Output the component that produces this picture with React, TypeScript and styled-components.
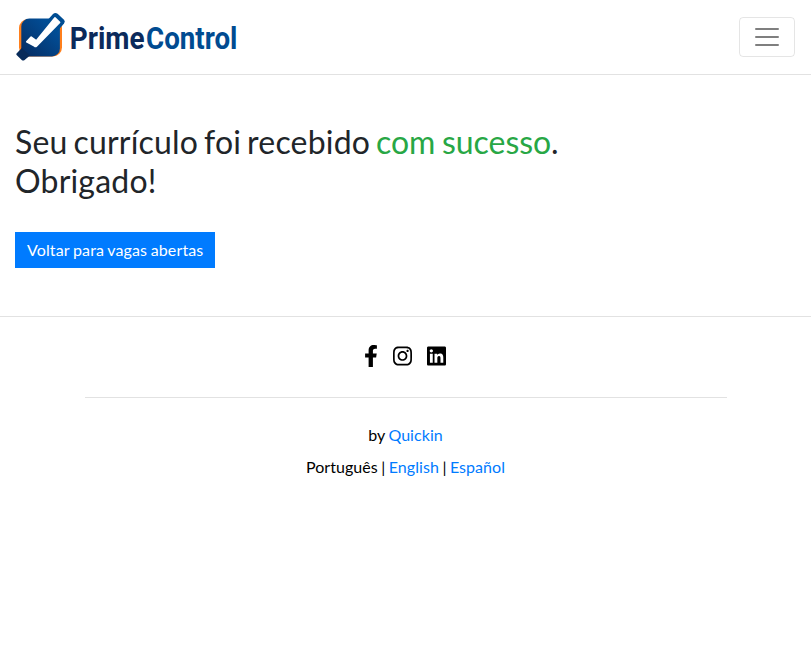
import React from "react";
import styled, { createGlobalStyle } from "styled-components";
import { FaFacebookF, FaInstagram, FaLinkedin } from "react-icons/fa";

const GlobalStyle = createGlobalStyle`
  *, *::before, *::after { box-sizing: border-box; }
  body {
    margin: 0;
    background: #fff;
    color: #212529;
    font: 400 16px/1.5 Lato, sans-serif;
  }
`;

const Header = styled.header`
  display: flex;
  align-items: center;
  justify-content: space-between;
  height: 75px;
  padding: 0 16px;
  border-bottom: 1px solid #e2e2e2;
`;

const LogoLink = styled.a`
  display: block;
  height: 50px;
  svg { display: block; overflow: visible; }
`;

const MenuButton = styled.button`
  display: flex;
  align-items: center;
  justify-content: center;
  width: 56px;
  height: 40px;
  padding: 0;
  border: 1px solid rgba(0, 0, 0, 0.1);
  border-radius: 4px;
  background: transparent;
`;

const Main = styled.main`
  height: 242px;
  padding: 47px 15px 0;
  border-bottom: 1px solid #e2e2e2;
`;

const Title = styled.h2`
  margin: 0 0 32px;
  font-size: 32px;
  font-weight: 400;
  line-height: 39px;
  letter-spacing: 0.2px;
  word-spacing: -2.5px;
`;

const Success = styled.span`
  color: #28a745;
  letter-spacing: -0.05px;
  word-spacing: -1.5px;
`;

const BackButton = styled.a`
  display: inline-block;
  height: 36px;
  padding: 0 12px;
  background: #007bff;
  color: #fff;
  line-height: 36px;
  letter-spacing: 0.12px;
  word-spacing: -0.6px;
  text-decoration: none;
`;

const Footer = styled.footer`
  width: 642px;
  margin: 0 auto;
  color: #000;
  text-align: center;
`;

const Social = styled.nav`
  display: flex;
  align-items: center;
  justify-content: center;
  gap: 15px;
  height: 81px;
  padding: 0 2px 2px 0;
  border-bottom: 1px solid #e2e2e2;
`;

const SocialLink = styled.a<{ $width: number }>`
  display: flex;
  color: #000;
  svg {
    width: ${({ $width }) => $width}px;
    height: 22px;
  }
`;

const Credits = styled.div`
  padding-top: 21px;
  line-height: 32px;
  letter-spacing: 0.06px;
  word-spacing: -0.7px;
`;

const Link = styled.a`
  color: #007bff;
  text-decoration: none;
`;

const Logo = () => (
  <svg width="226" height="50" viewBox="0 0 226 50" role="img" aria-label="PrimeControl">
    <defs>
      <linearGradient id="tile" x1="0" y1="1" x2="1" y2="0">
        <stop offset="0" stopColor="#062b60" />
        <stop offset="1" stopColor="#0057a5" />
      </linearGradient>
    </defs>
    <rect x="3" y="7" width="43" height="37.4" rx="9" fill="#ff7f1c" />
    <rect x="5.3" y="6.6" width="38.6" height="37.8" rx="8" fill="url(#tile)" />
    <path d="M37 1.9 Q39.3 0 41.6 1.7 L48 7.8 Q49.6 9.6 48 11.6 L40 21 L29 11Z" fill="#004d93" />
    <path d="M5.8 36 L14 43.4 L8.3 48.2 Q7.1 49 6 48.2 L.6 43 Q-.2 42 .8 41.2Z" fill="#082b5a" />
    <path
      d="M10.8 29.8 L15.2 25.2 L20.4 28.9 L38.9 6 L43.5 10.4 L20.3 34 Q19.5 34.8 18.7 34Z"
      fill="#fff" stroke="#fff" strokeWidth="1.8" strokeLinejoin="round"
    />
    <g fontFamily="Roboto, sans-serif" fontSize="30.5" fontWeight="700">
      <text x="53.8" y="37" fill="#0b2a5b" textLength="74.8" lengthAdjust="spacingAndGlyphs">Prime</text>
      <text x="130" y="37" fill="#004b91" textLength="91.4" lengthAdjust="spacingAndGlyphs">Control</text>
    </g>
  </svg>
);

const MenuIcon = () => (
  <svg width="30" height="30" viewBox="0 0 30 30" aria-hidden="true">
    <path d="M4 7h22M4 15h22M4 23h22" stroke="rgba(0,0,0,.5)" strokeWidth="2" strokeLinecap="round" strokeMiterlimit="10" />
  </svg>
);

export default function App() {
  return (
    <>
      <GlobalStyle />
      <Header>
        <LogoLink><Logo /></LogoLink>
        <MenuButton aria-label="Menu"><MenuIcon /></MenuButton>
      </Header>
      <Main>
        <Title>
          Seu currículo foi recebido <Success>com sucesso</Success>.<br />Obrigado!
        </Title>
        <BackButton>Voltar para vagas abertas</BackButton>
      </Main>
      <Footer>
        <Social>
          <SocialLink $width={14} aria-label="Facebook"><FaFacebookF /></SocialLink>
          <SocialLink $width={19} aria-label="Instagram"><FaInstagram /></SocialLink>
          <SocialLink $width={19} aria-label="LinkedIn"><FaLinkedin /></SocialLink>
        </Social>
        <Credits>
          <div>by <Link>Quickin</Link></div>
          <div>Português | <Link>English</Link> | <Link>Español</Link></div>
        </Credits>
      </Footer>
    </>
  );
}
